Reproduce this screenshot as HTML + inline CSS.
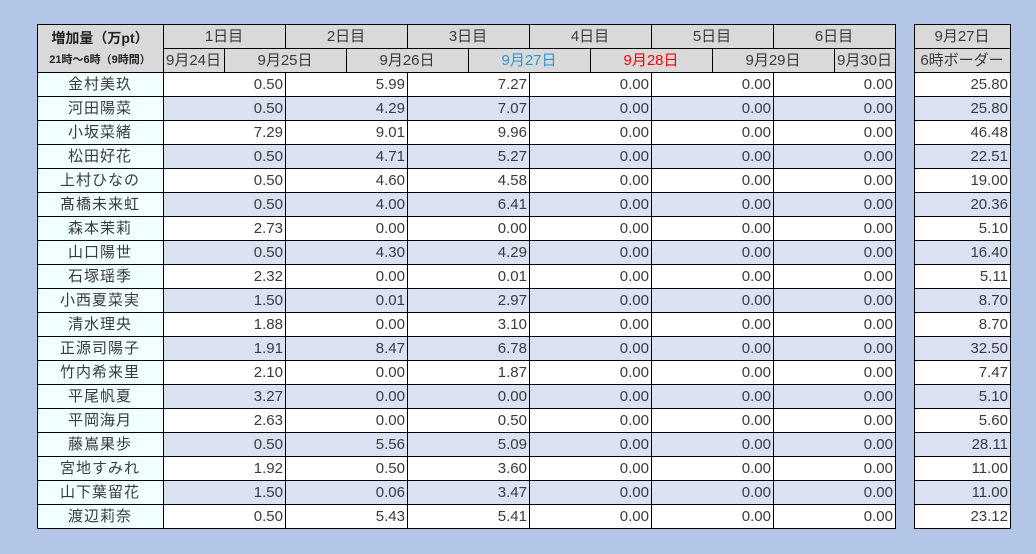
<!DOCTYPE html>
<html><head><meta charset="utf-8"><style>
body{margin:0;width:1036px;height:554px;background:#b4c6e7;position:relative;overflow:hidden;font-family:"Liberation Sans","Noto Sans CJK JP",sans-serif;}
table{border-collapse:collapse;table-layout:fixed;position:absolute;top:24px;}
td{border:1px solid #000;height:23px;padding:0 2px 0 1px;font-size:14px;color:#3a3a3a;white-space:nowrap;overflow:hidden;line-height:23px;}
.h{background:#d9d9d9;text-align:center;font-size:15px;}
.n{background:#f0ffff;text-align:center;font-size:15px;letter-spacing:1px;}
.v{text-align:right;background:#fff;font-size:15px;}
tr.a .v{background:#d9e1f2;}
.b{color:#2e96d8}.r{color:#f00}
#t1{left:37px;width:859px}
#t2{left:914px;width:97px}
</style></head><body>
<table id="t1">
<colgroup><col style="width:126px"><col span="12" style="width:61px"></colgroup>
<tr><td class="h" rowspan="2" style="line-height:20px;color:#222"><b style="font-size:14px">増加量（万pt）</b><br><b style="font-size:11px">21時～6時（9時間）</b></td>
<td class="h" colspan="2">1日目</td><td class="h" colspan="2">2日目</td><td class="h" colspan="2">3日目</td><td class="h" colspan="2">4日目</td><td class="h" colspan="2">5日目</td><td class="h" colspan="2">6日目</td></tr>
<tr><td class="h">9月24日</td><td class="h" colspan="2">9月25日</td><td class="h" colspan="2">9月26日</td><td class="h b" colspan="2">9月27日</td><td class="h r" colspan="2">9月28日</td><td class="h" colspan="2">9月29日</td><td class="h">9月30日</td></tr>
<tr><td class="n">金村美玖</td><td class="v" colspan="2">0.50</td><td class="v" colspan="2">5.99</td><td class="v" colspan="2">7.27</td><td class="v" colspan="2">0.00</td><td class="v" colspan="2">0.00</td><td class="v" colspan="2">0.00</td></tr>
<tr class="a"><td class="n">河田陽菜</td><td class="v" colspan="2">0.50</td><td class="v" colspan="2">4.29</td><td class="v" colspan="2">7.07</td><td class="v" colspan="2">0.00</td><td class="v" colspan="2">0.00</td><td class="v" colspan="2">0.00</td></tr>
<tr><td class="n">小坂菜緒</td><td class="v" colspan="2">7.29</td><td class="v" colspan="2">9.01</td><td class="v" colspan="2">9.96</td><td class="v" colspan="2">0.00</td><td class="v" colspan="2">0.00</td><td class="v" colspan="2">0.00</td></tr>
<tr class="a"><td class="n">松田好花</td><td class="v" colspan="2">0.50</td><td class="v" colspan="2">4.71</td><td class="v" colspan="2">5.27</td><td class="v" colspan="2">0.00</td><td class="v" colspan="2">0.00</td><td class="v" colspan="2">0.00</td></tr>
<tr><td class="n">上村ひなの</td><td class="v" colspan="2">0.50</td><td class="v" colspan="2">4.60</td><td class="v" colspan="2">4.58</td><td class="v" colspan="2">0.00</td><td class="v" colspan="2">0.00</td><td class="v" colspan="2">0.00</td></tr>
<tr class="a"><td class="n">髙橋未来虹</td><td class="v" colspan="2">0.50</td><td class="v" colspan="2">4.00</td><td class="v" colspan="2">6.41</td><td class="v" colspan="2">0.00</td><td class="v" colspan="2">0.00</td><td class="v" colspan="2">0.00</td></tr>
<tr><td class="n">森本茉莉</td><td class="v" colspan="2">2.73</td><td class="v" colspan="2">0.00</td><td class="v" colspan="2">0.00</td><td class="v" colspan="2">0.00</td><td class="v" colspan="2">0.00</td><td class="v" colspan="2">0.00</td></tr>
<tr class="a"><td class="n">山口陽世</td><td class="v" colspan="2">0.50</td><td class="v" colspan="2">4.30</td><td class="v" colspan="2">4.29</td><td class="v" colspan="2">0.00</td><td class="v" colspan="2">0.00</td><td class="v" colspan="2">0.00</td></tr>
<tr><td class="n">石塚瑶季</td><td class="v" colspan="2">2.32</td><td class="v" colspan="2">0.00</td><td class="v" colspan="2">0.01</td><td class="v" colspan="2">0.00</td><td class="v" colspan="2">0.00</td><td class="v" colspan="2">0.00</td></tr>
<tr class="a"><td class="n">小西夏菜実</td><td class="v" colspan="2">1.50</td><td class="v" colspan="2">0.01</td><td class="v" colspan="2">2.97</td><td class="v" colspan="2">0.00</td><td class="v" colspan="2">0.00</td><td class="v" colspan="2">0.00</td></tr>
<tr><td class="n">清水理央</td><td class="v" colspan="2">1.88</td><td class="v" colspan="2">0.00</td><td class="v" colspan="2">3.10</td><td class="v" colspan="2">0.00</td><td class="v" colspan="2">0.00</td><td class="v" colspan="2">0.00</td></tr>
<tr class="a"><td class="n">正源司陽子</td><td class="v" colspan="2">1.91</td><td class="v" colspan="2">8.47</td><td class="v" colspan="2">6.78</td><td class="v" colspan="2">0.00</td><td class="v" colspan="2">0.00</td><td class="v" colspan="2">0.00</td></tr>
<tr><td class="n">竹内希来里</td><td class="v" colspan="2">2.10</td><td class="v" colspan="2">0.00</td><td class="v" colspan="2">1.87</td><td class="v" colspan="2">0.00</td><td class="v" colspan="2">0.00</td><td class="v" colspan="2">0.00</td></tr>
<tr class="a"><td class="n">平尾帆夏</td><td class="v" colspan="2">3.27</td><td class="v" colspan="2">0.00</td><td class="v" colspan="2">0.00</td><td class="v" colspan="2">0.00</td><td class="v" colspan="2">0.00</td><td class="v" colspan="2">0.00</td></tr>
<tr><td class="n">平岡海月</td><td class="v" colspan="2">2.63</td><td class="v" colspan="2">0.00</td><td class="v" colspan="2">0.50</td><td class="v" colspan="2">0.00</td><td class="v" colspan="2">0.00</td><td class="v" colspan="2">0.00</td></tr>
<tr class="a"><td class="n">藤嶌果歩</td><td class="v" colspan="2">0.50</td><td class="v" colspan="2">5.56</td><td class="v" colspan="2">5.09</td><td class="v" colspan="2">0.00</td><td class="v" colspan="2">0.00</td><td class="v" colspan="2">0.00</td></tr>
<tr><td class="n">宮地すみれ</td><td class="v" colspan="2">1.92</td><td class="v" colspan="2">0.50</td><td class="v" colspan="2">3.60</td><td class="v" colspan="2">0.00</td><td class="v" colspan="2">0.00</td><td class="v" colspan="2">0.00</td></tr>
<tr class="a"><td class="n">山下葉留花</td><td class="v" colspan="2">1.50</td><td class="v" colspan="2">0.06</td><td class="v" colspan="2">3.47</td><td class="v" colspan="2">0.00</td><td class="v" colspan="2">0.00</td><td class="v" colspan="2">0.00</td></tr>
<tr><td class="n">渡辺莉奈</td><td class="v" colspan="2">0.50</td><td class="v" colspan="2">5.43</td><td class="v" colspan="2">5.41</td><td class="v" colspan="2">0.00</td><td class="v" colspan="2">0.00</td><td class="v" colspan="2">0.00</td></tr>
</table>
<table id="t2">
<tr><td class="h">9月27日</td></tr>
<tr><td class="h">6時ボーダー</td></tr>
<tr><td class="v">25.80</td></tr>
<tr class="a"><td class="v">25.80</td></tr>
<tr><td class="v">46.48</td></tr>
<tr class="a"><td class="v">22.51</td></tr>
<tr><td class="v">19.00</td></tr>
<tr class="a"><td class="v">20.36</td></tr>
<tr><td class="v">5.10</td></tr>
<tr class="a"><td class="v">16.40</td></tr>
<tr><td class="v">5.11</td></tr>
<tr class="a"><td class="v">8.70</td></tr>
<tr><td class="v">8.70</td></tr>
<tr class="a"><td class="v">32.50</td></tr>
<tr><td class="v">7.47</td></tr>
<tr class="a"><td class="v">5.10</td></tr>
<tr><td class="v">5.60</td></tr>
<tr class="a"><td class="v">28.11</td></tr>
<tr><td class="v">11.00</td></tr>
<tr class="a"><td class="v">11.00</td></tr>
<tr><td class="v">23.12</td></tr>
</table>
</body></html>
